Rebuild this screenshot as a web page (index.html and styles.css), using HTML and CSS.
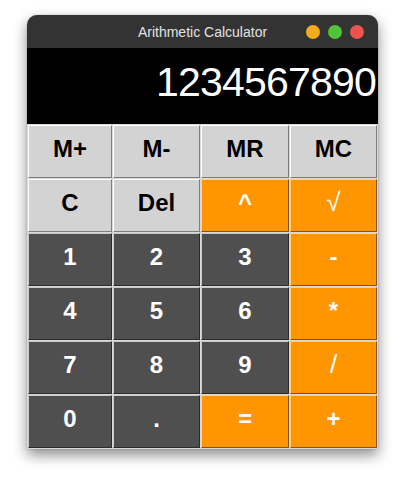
FILE: index.html
```html
<!DOCTYPE html>
<html>
<head>
<meta charset="utf-8">
<link rel="stylesheet" href="styles.css">
</head>
<body>
<div class="window">
  <div class="titlebar">
    <span class="title">Arithmetic Calculator</span>
    <div class="lights">
      <span class="light yellow"></span>
      <span class="light green"></span>
      <span class="light red"></span>
    </div>
  </div>
  <div class="display">1234567890</div>
  <div class="keys">
    <div class="key light-key">M+</div>
    <div class="key light-key">M-</div>
    <div class="key light-key">MR</div>
    <div class="key light-key">MC</div>
    <div class="key light-key">C</div>
    <div class="key light-key">Del</div>
    <div class="key op">^</div>
    <div class="key op thin">√</div>
    <div class="key num">1</div>
    <div class="key num">2</div>
    <div class="key num">3</div>
    <div class="key op">-</div>
    <div class="key num">4</div>
    <div class="key num">5</div>
    <div class="key num">6</div>
    <div class="key op">*</div>
    <div class="key num">7</div>
    <div class="key num">8</div>
    <div class="key num">9</div>
    <div class="key op thin">/</div>
    <div class="key num">0</div>
    <div class="key num">.</div>
    <div class="key op">=</div>
    <div class="key op">+</div>
  </div>
</div>
</body>
</html>
```
FILE: styles.css
```css
html, body {
  margin: 0;
  padding: 0;
  background: #ffffff;
}
body {
  width: 406px;
  height: 488px;
  overflow: hidden;
  font-family: "Liberation Sans", Arial, sans-serif;
}
.window {
  margin: 15px 0 0 27px;
  width: 351px;
  border-radius: 10px 10px 0 0;
  overflow: hidden;
  box-shadow: 0 6px 14px rgba(0, 0, 0, 0.45), 0 0 1px rgba(0, 0, 0, 0.6);
  background: #d9d9d9;
}
.titlebar {
  height: 33px;
  background: #333333;
  display: flex;
  align-items: center;
  justify-content: center;
  position: relative;
}
.title {
  color: #e2e2e2;
  font-size: 14px;
}
.lights {
  position: absolute;
  right: 14px;
  top: 10px;
  display: flex;
  gap: 8px;
}
.light {
  width: 14px;
  height: 14px;
  border-radius: 50%;
  display: block;
}
.yellow { background: #f1ad1d; }
.green { background: #4fc436; }
.red { background: #ec544d; }
.display {
  height: 76px;
  background: #000000;
  color: #ffffff;
  font-size: 41px;
  line-height: 1;
  text-align: right;
  padding: 14px 2px 0 0;
  box-sizing: border-box;
  letter-spacing: -0.8px;
}
.keys {
  display: grid;
  grid-template-columns: 84px 87px 88px 87px;
  grid-auto-rows: 53px;
  gap: 1px;
  padding: 1px;
  background: #d9d9d9;
}
.key {
  box-sizing: border-box;
  display: flex;
  align-items: center;
  justify-content: center;
  font-weight: bold;
  font-size: 24px;
  padding-bottom: 6px;
  border-top: 1px solid #ffffff;
  border-left: 1px solid #ffffff;
  border-right: 1px solid #7d7d7d;
  border-bottom: 1px solid #7d7d7d;
}
.light-key {
  background: #d3d3d3;
  color: #000000;
}
.num {
  background: #4f4f4f;
  color: #ffffff;
  border-top-color: #c9c9c9;
  border-left-color: #c9c9c9;
  border-right-color: #2a2a2a;
  border-bottom-color: #2a2a2a;
}
.op {
  background: #ff9500;
  color: #ffffff;
  border-top-color: #ffd08a;
  border-left-color: #ffd08a;
  border-right-color: #8a5200;
  border-bottom-color: #8a5200;
}
.thin {
  font-weight: normal;
  font-size: 26px;
}
```
